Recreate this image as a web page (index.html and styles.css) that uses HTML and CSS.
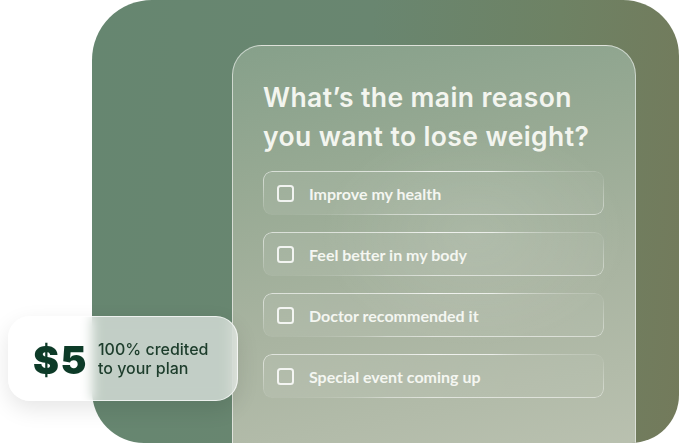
FILE: index.html
```html
<!DOCTYPE html>
<html lang="en">
<head>
<meta charset="utf-8">
<title>Quiz</title>
<link rel="stylesheet" href="styles.css">
</head>
<body>
<div class="scene">
  <div class="panel">
    <div class="card">
      <h1 class="title">What’s the main reason<br>you want to lose weight?</h1>
      <ul class="options">
        <li class="option"><span class="check"></span><span class="label">Improve my health</span></li>
        <li class="option"><span class="check"></span><span class="label">Feel better in my body</span></li>
        <li class="option"><span class="check"></span><span class="label">Doctor recommended it</span></li>
        <li class="option"><span class="check"></span><span class="label">Special event coming up</span></li>
      </ul>
    </div>
  </div>
  <div class="badge">
    <span class="amount">$5</span>
    <span class="note">100% credited<br>to your plan</span>
  </div>
</div>
</body>
</html>
```
FILE: styles.css
```css
* { box-sizing: border-box; }
html, body { margin: 0; padding: 0; background: #ffffff; }
body { width: 679px; height: 443px; overflow: hidden; }

.scene {
  position: relative;
  width: 679px;
  height: 443px;
}

.panel {
  margin-left: 92px;
  width: 587px;
  height: 443px;
  border-radius: 60px 56px 48px 52px;
  background: linear-gradient(95deg, #668670 0%, #698670 45%, #6e8264 75%, #737a5b 100%);
  padding-top: 45px;
  padding-left: 140px;
  overflow: hidden;
}

.card {
  width: 404px;
  height: 420px;
  border-radius: 30px 30px 0 0;
  border: 1px solid rgba(255, 255, 255, 0.55);
  border-bottom: none;
  background:
    radial-gradient(ellipse 220px 160px at 60% 45%, rgba(255,255,255,0.10), rgba(255,255,255,0) 70%),
    linear-gradient(168deg, #86a08a 0%, #98aa94 30%, #a9b4a1 60%, #bbc2b1 100%);
  padding: 32px 0 0 30px;
}

.title {
  margin: 0;
  font-family: "Inter", "Open Sans", sans-serif;
  font-weight: 600;
  font-size: 26.5px;
  line-height: 39px;
  letter-spacing: 0.4px;
  color: #f3f5ef;
}

.options {
  list-style: none;
  margin: 15px 0 0 0;
  padding: 0;
  display: flex;
  flex-direction: column;
  gap: 17px;
}

.option {
  position: relative;
  width: 341px;
  height: 44px;
  border-radius: 9px;
  background: linear-gradient(90deg, rgba(255,255,255,0.08), rgba(255,255,255,0.04));
  display: flex;
  align-items: center;
  padding-left: 14px;
  gap: 15px;
}

.option::before {
  content: "";
  position: absolute;
  inset: 0;
  border-radius: 9px;
  padding: 1px;
  background: conic-gradient(from 0deg,
    rgba(255,255,255,0.85) 0deg,
    rgba(255,255,255,0.75) 70deg,
    rgba(255,255,255,0.05) 84deg,
    rgba(255,255,255,0.55) 100deg,
    rgba(255,255,255,0.60) 180deg,
    rgba(255,255,255,0.45) 245deg,
    rgba(255,255,255,0.0) 262deg,
    rgba(255,255,255,0.6) 276deg,
    rgba(255,255,255,0.85) 360deg);
  -webkit-mask: linear-gradient(#000 0 0) content-box, linear-gradient(#000 0 0);
  -webkit-mask-composite: xor;
  mask-composite: exclude;
  pointer-events: none;
}

.check {
  flex: none;
  width: 17px;
  height: 17px;
  border: 2px solid rgba(255, 255, 255, 0.85);
  border-radius: 3.5px;
}

.label {
  font-family: "Lato", sans-serif;
  font-weight: 700;
  font-size: 16px;
  color: #f4f6f1;
}

.badge {
  position: absolute;
  left: 8px;
  top: 316px;
  width: 230px;
  height: 85px;
  border-radius: 22px;
  background: rgba(255, 255, 255, 0.6);
  -webkit-backdrop-filter: blur(6px);
  backdrop-filter: blur(6px);
  box-shadow: 0 8px 22px rgba(0, 0, 0, 0.10);
  border: 1px solid rgba(255, 255, 255, 0.7);
  display: flex;
  align-items: center;
  padding-left: 24px;
  gap: 10px;
}

.amount {
  font-family: "Inter", "DejaVu Sans", sans-serif;
  font-weight: 900;
  font-size: 39px;
  letter-spacing: 1.5px;
  color: #0d3b28;
  line-height: 1;
  margin-top: 2px;
}

.note {
  font-family: "Inter", "Open Sans", sans-serif;
  font-weight: 500;
  font-size: 16px;
  line-height: 19px;
  color: #1d3d2c;
}
```
